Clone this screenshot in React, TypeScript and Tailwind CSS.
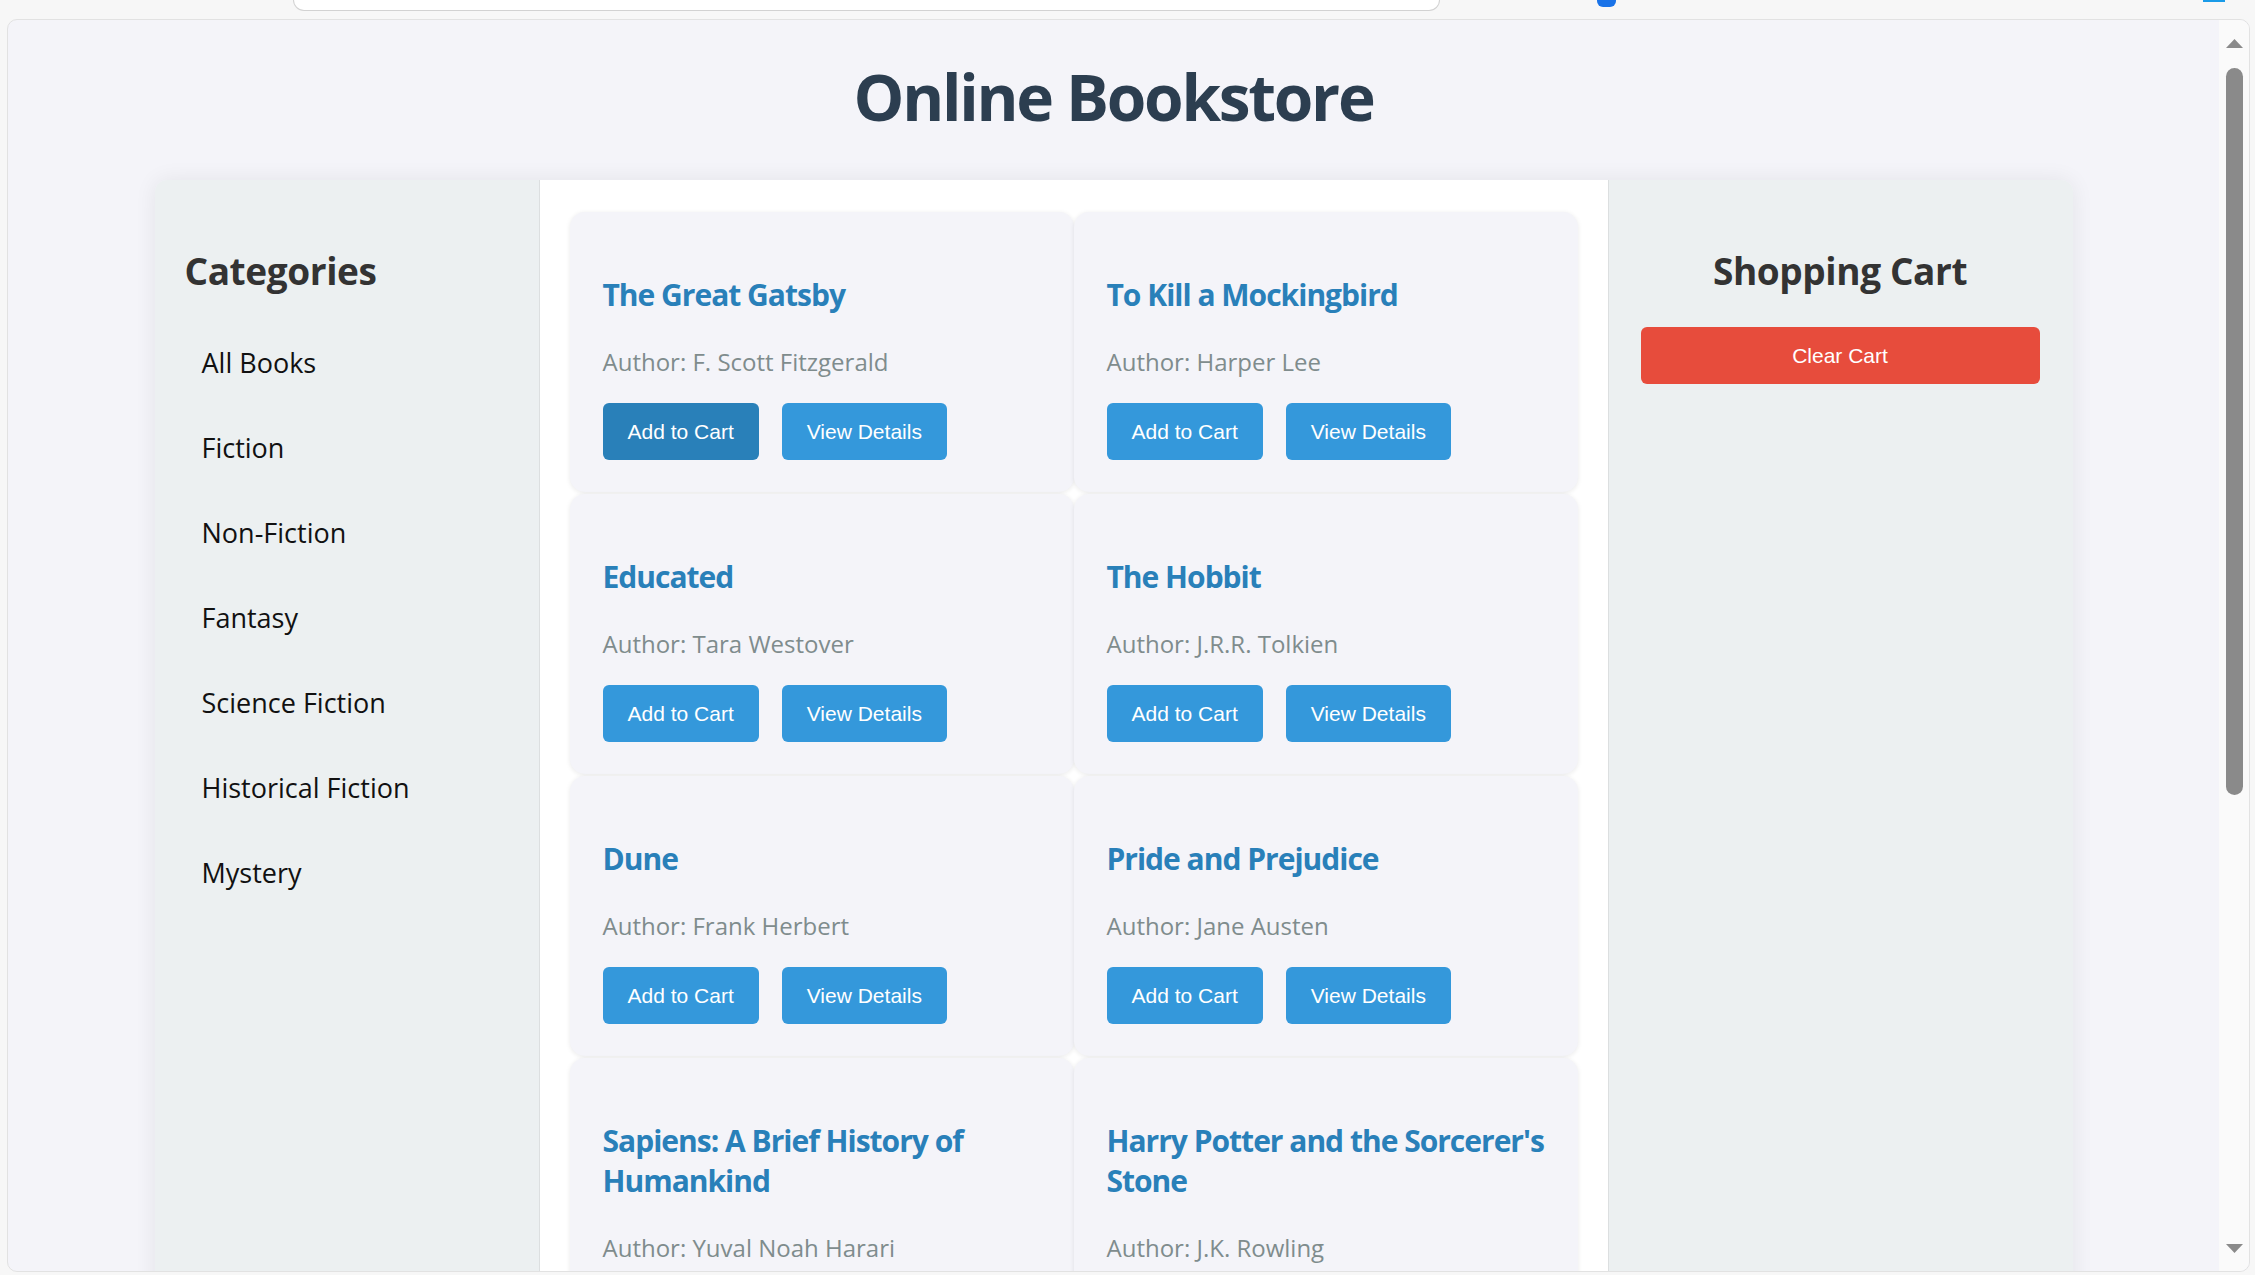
import React from 'react';

type Book = {
  title: string;
  author: string;
};

const books: Book[] = [
  { title: 'The Great Gatsby', author: 'F. Scott Fitzgerald' },
  { title: 'To Kill a Mockingbird', author: 'Harper Lee' },
  { title: 'Educated', author: 'Tara Westover' },
  { title: 'The Hobbit', author: 'J.R.R. Tolkien' },
  { title: 'Dune', author: 'Frank Herbert' },
  { title: 'Pride and Prejudice', author: 'Jane Austen' },
  { title: 'Sapiens: A Brief History of Humankind', author: 'Yuval Noah Harari' },
  { title: "Harry Potter and the Sorcerer's Stone", author: 'J.K. Rowling' },
];

const categories: string[] = [
  'All Books',
  'Fiction',
  'Non-Fiction',
  'Fantasy',
  'Science Fiction',
  'Historical Fiction',
  'Mystery',
];

function BrowserBar() {
  return (
    <div className="relative h-[19px]">
      <div className="absolute left-[293px] top-0 h-[11px] w-[1147px] rounded-b-[12px] border border-t-0 border-[#d2d2d2] bg-white" />
      <div className="absolute left-[1597px] top-0 h-[7px] w-[19px] rounded-b-[6px] bg-[#1a73e8]" />
      <div className="absolute left-[2203px] top-0 h-[2px] w-[22px] bg-[#1a9be8]" />
    </div>
  );
}

function Scrollbar() {
  return (
    <div className="flex w-[30px] shrink-0 flex-col items-center bg-[#fafafa] pt-[19px] pb-[18px]">
      <svg width="17" height="9" viewBox="0 0 17 9">
        <path d="M8.5 0 L17 9 L0 9 Z" fill="#8a8a8a" />
      </svg>
      <div className="mt-[20px] h-[727px] w-[17px] rounded-full bg-[#8a8a8a]" />
      <div className="flex-1" />
      <svg width="17" height="9" viewBox="0 0 17 9">
        <path d="M0 0 L17 0 L8.5 9 Z" fill="#8a8a8a" />
      </svg>
    </div>
  );
}

function BookCard({ book, active }: { book: Book; active: boolean }) {
  return (
    <div className="rounded-[15px] bg-[#f4f4f9] pl-[33px] pr-[20px] pt-[63px] pb-[32px] shadow-[0_1px_5px_rgba(0,0,0,0.09)]">
      <h3 className="text-[30px] font-bold leading-[40px] tracking-[-1px] text-[#2980b9]">{book.title}</h3>
      <p className="mt-[31px] text-[24px] leading-[32px] text-[#7f8c8d]">Author: {book.author}</p>
      <div className="mt-[25px] flex gap-[23px] font-['Liberation_Sans',Arial,sans-serif] text-[21px] text-white">
        <button
          className={
            active
              ? 'flex h-[57px] items-center rounded-[6px] bg-[#2980b9] px-[25px]'
              : 'flex h-[57px] items-center rounded-[6px] bg-[#3498db] px-[25px]'
          }
        >
          Add to Cart
        </button>
        <button className="flex h-[57px] items-center rounded-[6px] bg-[#3498db] px-[25px]">View Details</button>
      </div>
    </div>
  );
}

export default function App() {
  return (
    <div className="h-[1275px] w-[2255px] overflow-hidden bg-[#f7f7f7] font-['Open_Sans',sans-serif]">
      <BrowserBar />
      <div className="ml-[7px] flex h-[1253px] w-[2243px] overflow-hidden rounded-[10px] border border-[#e2e2e2] bg-[#f4f4f9]">
        <main className="flex-1 overflow-hidden">
          <h1 className="pt-[37px] text-center text-[64px] font-bold leading-[80px] tracking-[-2.3px] text-[#2c3e50]">
            Online Bookstore
          </h1>

          <div className="mx-auto mt-[43px] flex w-[1918px] rounded-[12px] shadow-[0_0_22px_rgba(0,0,0,0.07)]">
            {/* categories */}
            <aside className="w-[385px] shrink-0 rounded-tl-[12px] border-r border-[#dcdfe0] bg-[#ecf0f1] px-[30px] pt-[67px]">
              <h2 className="text-[37px] font-bold leading-[48px] tracking-[-0.4px] text-[#333333]">Categories</h2>
              <ul className="mt-[25px]">
                {categories.map((c) => (
                  <li key={c} className="pl-[17px] text-[27px] leading-[85px] text-[#111111]">
                    {c}
                  </li>
                ))}
              </ul>
            </aside>

            {/* books */}
            <section className="flex-1 bg-white px-[30px] pt-[32px]">
              <div className="grid grid-cols-2 gap-y-[2px]">
                {books.map((b, i) => (
                  <BookCard key={b.title} book={b} active={i === 0} />
                ))}
              </div>
            </section>

            {/* cart */}
            <aside className="w-[465px] shrink-0 rounded-tr-[12px] border-l border-[#dcdfe0] bg-[#ecf0f1] pl-[32px] pr-[33px] pt-[67px]">
              <h2 className="text-center text-[37px] font-bold leading-[48px] tracking-[-0.4px] text-[#333333]">
                Shopping Cart
              </h2>
              <button className="mt-[32px] flex h-[57px] w-full items-center justify-center rounded-[6px] bg-[#e74c3c] font-['Liberation_Sans',Arial,sans-serif] text-[21px] text-white">
                Clear Cart
              </button>
            </aside>
          </div>
        </main>
        <Scrollbar />
      </div>
    </div>
  );
}
